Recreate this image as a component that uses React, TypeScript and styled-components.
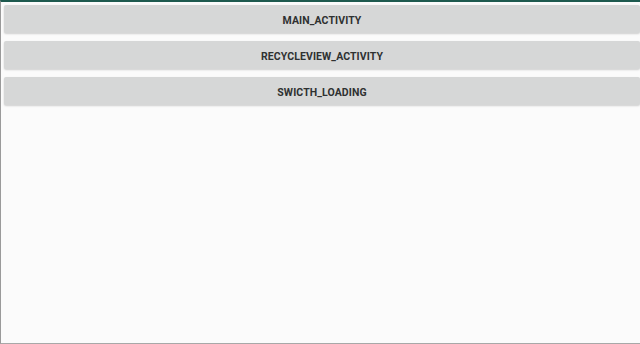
import React from "react";
import styled, { createGlobalStyle } from "styled-components";

const Global = createGlobalStyle`
  html, body { margin: 0; padding: 0; background: #fbfbfb; }
  body { font-family: Roboto, "Noto Sans", sans-serif; }
`;

const Screen = styled.div`
  box-sizing: border-box;
  width: 640px;
  height: 344px;
  background: #fbfbfb;
  border-top: 2px solid #1e5a4f;
  border-left: 1px solid #9a9a9a;
  border-bottom: 1px solid #a8a8a8;
  display: flex;
  flex-direction: column;
  gap: 8px;
  padding: 3px 0 0 3px;
  overflow: hidden;
`;

const ActionButton = styled.button`
  box-sizing: border-box;
  height: 28px;
  width: 100%;
  margin: 0;
  border: none;
  border-radius: 2px;
  background: #d6d7d7;
  box-shadow: 0 1px 2px rgba(0, 0, 0, 0.18);
  color: #2f3131;
  font-family: Roboto, "Noto Sans", sans-serif;
  font-weight: 700;
  font-size: 10.5px;
  letter-spacing: 0.1px;
  text-transform: uppercase;
  display: flex;
  align-items: center;
  justify-content: center;
  padding: 2px 0 0 0;
  cursor: pointer;
`;

const items = ["MAIN_ACTIVITY", "RECYCLEVIEW_ACTIVITY", "SWICTH_LOADING"];

export default function App() {
  return (
    <>
      <Global />
      <Screen>
        {items.map((t) => (
          <ActionButton key={t}>{t}</ActionButton>
        ))}
      </Screen>
    </>
  );
}
